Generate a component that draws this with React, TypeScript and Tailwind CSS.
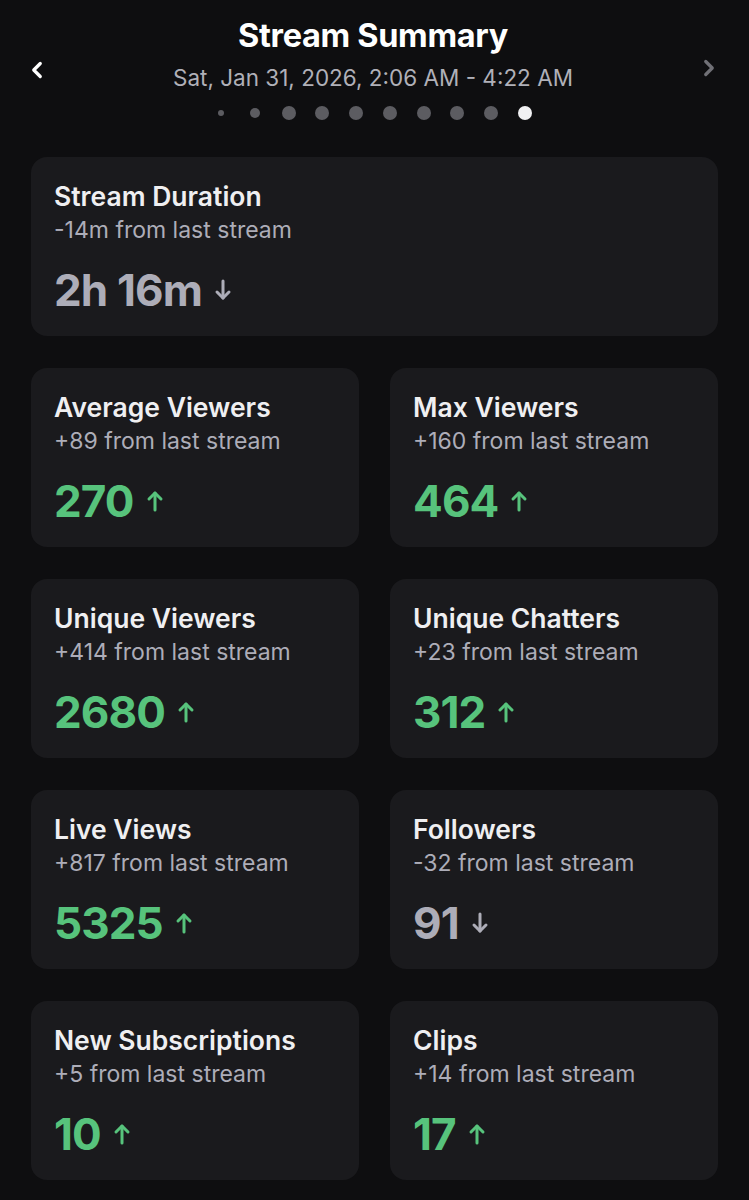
import { ChevronLeft, ChevronRight } from "lucide-react";

type Stat = { label: string; delta: string; value: string; up: boolean };

const STATS: Stat[] = [
  { label: "Average Viewers", delta: "+89", value: "270", up: true },
  { label: "Max Viewers", delta: "+160", value: "464", up: true },
  { label: "Unique Viewers", delta: "+414", value: "2680", up: true },
  { label: "Unique Chatters", delta: "+23", value: "312", up: true },
  { label: "Live Views", delta: "+817", value: "5325", up: true },
  { label: "Followers", delta: "-32", value: "91", up: false },
  { label: "New Subscriptions", delta: "+5", value: "10", up: true },
  { label: "Clips", delta: "+14", value: "17", up: true }
];

// page dots: small, medium, then full size; last one is the active page
const DOTS = ["h-[6px] w-[6px]", "h-[10px] w-[10px]", "h-[14px] w-[14px]", "h-[14px] w-[14px]", "h-[14px] w-[14px]", "h-[14px] w-[14px]", "h-[14px] w-[14px]", "h-[14px] w-[14px]", "h-[14px] w-[14px]"];

function Arrow({ up }: { up: boolean }) {
  return (
    <svg width="18" height="22" viewBox="0 0 18 22" fill="none" stroke="currentColor" strokeWidth="3" strokeLinecap="round" strokeLinejoin="round" className={up ? "" : "rotate-180"}>
      <path d="M9 20V3" />
      <path d="M3 9l6-6 6 6" />
    </svg>
  );
}

function StatCard({ stat }: { stat: Stat }) {
  const color = stat.up ? "text-[#57c37c]" : "text-[#adadb8]";
  return (
    <div className="h-[179px] rounded-2xl bg-[#1a1a1d] px-[23px] pt-[23px]">
      <p className="text-[26.5px] font-semibold leading-[32px] text-[#efeff1]">{stat.label}</p>
      <p className="mt-[3px] text-[23px] leading-[30px] text-[#adadb8]">{stat.delta} from last stream</p>
      <div className={`mt-[19px] flex items-center gap-[12px] ${color}`}>
        <span className="text-[44px] font-bold leading-[52px] tracking-[-0.02em]">{stat.value}</span>
        <Arrow up={stat.up} />
      </div>
    </div>
  );
}

export default function App() {
  return (
    <div className="min-h-[1200px] w-[749px] bg-[#0e0e10] font-['Inter',sans-serif]">
      <header className="flex items-start justify-between pl-[24px] pr-[27px] pt-[16px]">
        <ChevronLeft className="mt-[41px] h-[26px] w-[26px] text-white" strokeWidth={3} />
        <div className="flex flex-col items-center">
          <h1 className="text-[32.5px] font-bold leading-[40px] tracking-[-0.01em] text-white">Stream Summary</h1>
          <p className="mt-[7px] text-[22.5px] leading-[30px] text-[#b0b0b8]">Sat, Jan 31, 2026, 2:06 AM - 4:22 AM</p>
          <div className="mt-[13px] flex h-[14px] items-center">
            {DOTS.map((size, i) => (
              <div key={i} className="flex w-[33.7px] justify-center">
                <span className={`${size} rounded-full bg-[#5c5c61]`} />
              </div>
            ))}
            <div className="flex w-[33.7px] justify-center">
              <span className="h-[14px] w-[14px] rounded-full bg-[#f0f0f2]" />
            </div>
          </div>
        </div>
        <ChevronRight className="mt-[39px] h-[26px] w-[26px] text-[#707076]" strokeWidth={3} />
      </header>

      <main className="flex flex-col gap-[32px] px-[31px] pt-[37px]">
        <StatCard stat={{ label: "Stream Duration", delta: "-14m", value: "2h 16m", up: false }} />
        <div className="grid grid-cols-2 gap-x-[31px] gap-y-[32px]">
          {STATS.map((s) => (
            <StatCard key={s.label} stat={s} />
          ))}
        </div>
      </main>
    </div>
  );
}
